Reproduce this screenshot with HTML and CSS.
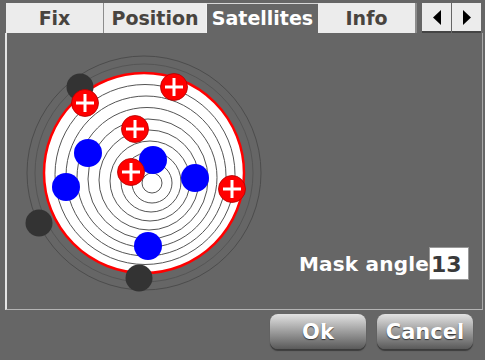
FILE: index.html
```html
<!DOCTYPE html>
<html>

<head>
    <meta charset="UTF-8">
    <title>Satellites</title>
    <link rel="stylesheet" href="styles.css">
</head>

<body>
    <!-- tab bar -->
    <div class="tabs">
        <div class="tab tab-fix">Fix</div>
        <div class="tab tab-pos">Position</div>
        <div class="tab tab-sat active">Satellites</div>
        <div class="tab tab-info">Info</div>
        <div class="arrows">
            <button class="arrow">
                <svg width="8" height="15" viewBox="0 0 8 15"><polygon points="8,0 0,7.5 8,15" fill="#000"/></svg>
            </button>
            <button class="arrow">
                <svg width="8" height="15" viewBox="0 0 8 15"><polygon points="0,0 8,7.5 0,15" fill="#000"/></svg>
            </button>
        </div>
    </div>

    <!-- sky plot panel -->
    <div class="panel">
        <svg class="sky" width="270" height="276" viewBox="7 33 270 276">
            <defs>
                <g id="used">
                    <circle r="13.5" fill="#f00" stroke="#b00000" stroke-width="0.8"/>
                    <path d="M-9 0H9M0 -9V9" stroke="#fff" stroke-width="3"/>
                </g>
            </defs>
            <circle cx="144" cy="173" r="117" fill="none" stroke="#4c4c4c"/>
            <circle cx="144" cy="173" r="109" fill="none" stroke="#555"/>
            <circle cx="144" cy="173" r="100" fill="#fff" stroke="#f00" stroke-width="2.5"/>
            <g fill="none" stroke="#555" stroke-width="1">
                <circle cx="145" cy="174.5" r="90"/>
                <circle cx="146" cy="176" r="80"/>
                <circle cx="147" cy="177.5" r="70"/>
                <circle cx="148" cy="179" r="60"/>
                <circle cx="149" cy="180" r="50"/>
                <circle cx="150" cy="181" r="40"/>
                <circle cx="151" cy="182" r="30"/>
                <circle cx="152" cy="183" r="20"/>
                <circle cx="152" cy="183" r="10"/>
            </g>
            <!-- not tracked -->
            <g fill="#333">
                <circle cx="80" cy="87" r="13.5"/>
                <circle cx="39" cy="223" r="13.5"/>
                <circle cx="139" cy="278" r="13.5"/>
            </g>
            <!-- tracked -->
            <g fill="#0000ff">
                <circle cx="88" cy="153" r="14"/>
                <circle cx="153" cy="160" r="14"/>
                <circle cx="66" cy="187" r="14"/>
                <circle cx="195" cy="178" r="14"/>
                <circle cx="148" cy="246" r="14"/>
            </g>
            <!-- used in fix -->
            <use href="#used" x="85" y="103"/>
            <use href="#used" x="174" y="87"/>
            <use href="#used" x="135" y="129"/>
            <use href="#used" x="131" y="172"/>
            <use href="#used" x="232" y="189"/>
        </svg>
        <div class="mask">
            <span class="mask-label">Mask angle</span>
            <span class="mask-box">13</span>
        </div>
    </div>

    <div class="actions">
        <button class="btn">Ok</button>
        <button class="btn">Cancel</button>
    </div>
</body>

</html>
```

FILE: styles.css
```css
body {
    margin: 0;
    background-color: #666;
    font-family: "DejaVu Sans", "Liberation Sans", sans-serif;
    font-weight: bold;
    width: 485px;
    height: 360px;
    overflow: hidden;
}

.tabs {
    display: flex;
    padding: 3px 0 0 6px;
    height: 30px;
}

.tab {
    height: 30px;
    line-height: 30px;
    font-size: 19px;
    text-align: center;
    color: #48443f;
    background-color: #ececec;
    box-sizing: border-box;
}

.tab-fix {
    width: 98px;
    border-right: 1px solid #8c8c8c;
}

.tab-pos {
    width: 102px;
}

.tab-sat {
    width: 112px;
    color: #fff;
    background-color: #666;
    border-top: 1px solid #d8d8d8;
    border-left: 1px solid #f2f2f2;
    line-height: 28px;
}

.tab-info {
    width: 99px;
    border-right: 2px solid #8c8c8c;
}

.arrows {
    display: flex;
    gap: 1px;
    margin-left: 5px;
}

.arrow {
    width: 29px;
    height: 30px;
    padding: 0;
    border: none;
    border-bottom: 2px solid #444;
    background-color: #ececec;
    display: flex;
    align-items: center;
    justify-content: center;
}

.panel {
    margin-left: 5px;
    width: 478px;
    height: 277px;
    box-sizing: border-box;
    border-left: 2px solid #e4e4e4;
    border-right: 1px solid #a8a8a8;
    border-bottom: 1px solid #b4b4b4;
    display: flex;
    justify-content: space-between;
    align-items: flex-end;
}

.sky {
    display: block;
    flex-shrink: 0;
    align-self: flex-start;
}

.mask {
    display: flex;
    align-items: center;
    margin: 0 13px 29px 0;
}

.mask-label {
    color: #fff;
    font-size: 20px;
    letter-spacing: 0.2px;
}

.mask-box {
    width: 40px;
    height: 33px;
    line-height: 33px;
    box-sizing: border-box;
    background-color: #fff;
    border: 1px solid #999;
    color: #3a3a3a;
    font-size: 22px;
    padding-left: 1px;
}

.actions {
    display: flex;
    justify-content: flex-end;
    gap: 11px;
    padding: 4px 12px 0 0;
}

.btn {
    width: 96px;
    height: 35px;
    border: none;
    border-radius: 8px;
    background: linear-gradient(#e2e2e2, #a4a4a4 45%, #5a5a5a);
    box-shadow: 0 2px 1px #3c3c3c;
    color: #fff;
    font-family: "DejaVu Sans", "Liberation Sans", sans-serif;
    font-weight: bold;
    font-size: 21px;
    text-shadow: 0 1px 1px #333;
    padding: 0;
}
```
